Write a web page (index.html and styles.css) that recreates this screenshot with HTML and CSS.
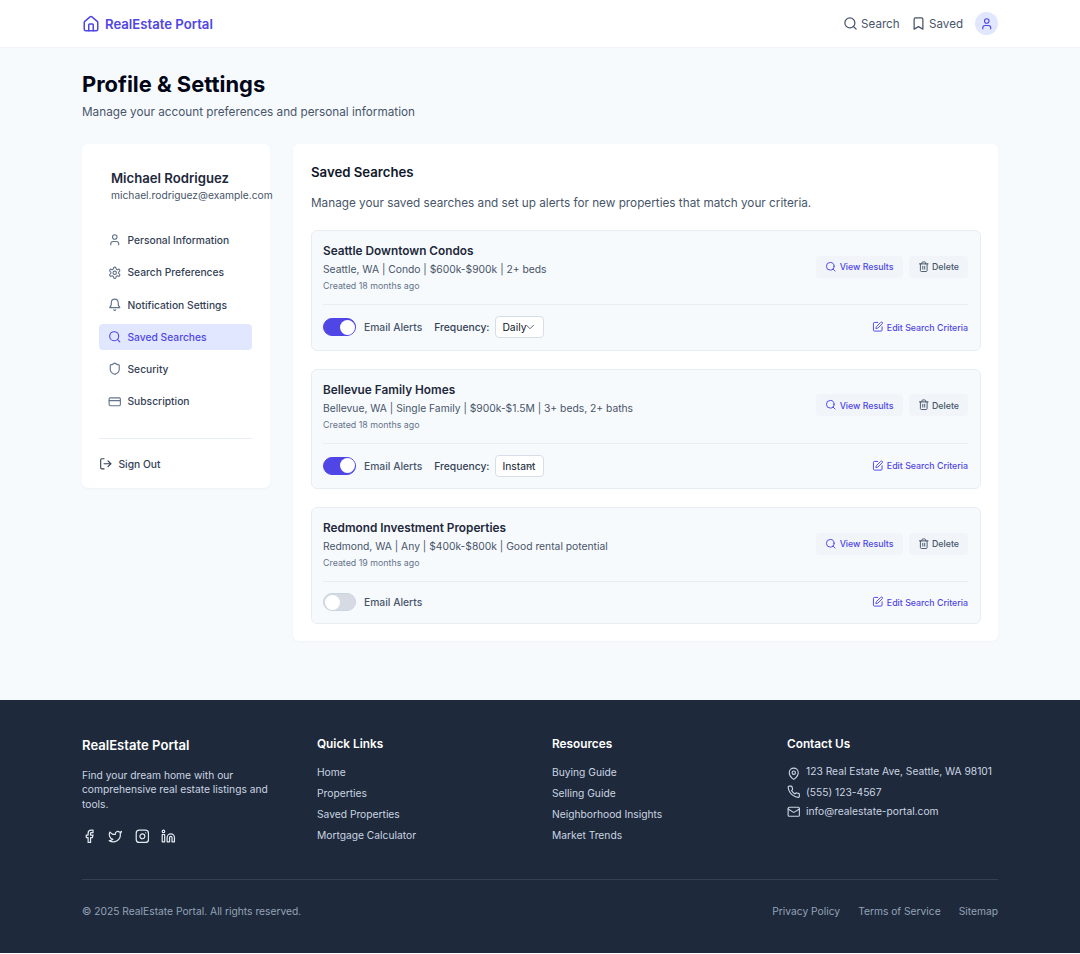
FILE: index.html
```html
<!DOCTYPE html>
<html lang="en">
<head>
  <meta charset="UTF-8" />
  <meta name="viewport" content="width=device-width, initial-scale=1.0" />
  <title>Profile &amp; Settings - RealEstate Portal</title>
  <link rel="stylesheet" href="styles.css">
</head>
<body>
  <!-- icon sprite -->
  <svg class="sprite" xmlns="http://www.w3.org/2000/svg">
    <symbol id="i-home" viewBox="0 0 24 24"><path d="M15 21v-8a1 1 0 0 0-1-1h-4a1 1 0 0 0-1 1v8"/><path d="M3 10a2 2 0 0 1 .709-1.528l7-5.999a2 2 0 0 1 2.582 0l7 5.999A2 2 0 0 1 21 10v9a2 2 0 0 1-2 2H5a2 2 0 0 1-2-2z"/></symbol>
    <symbol id="i-search" viewBox="0 0 24 24"><circle cx="11" cy="11" r="8"/><path d="m21 21-4.3-4.3"/></symbol>
    <symbol id="i-bookmark" viewBox="0 0 24 24"><path d="m19 21-7-4-7 4V5a2 2 0 0 1 2-2h10a2 2 0 0 1 2 2v16z"/></symbol>
    <symbol id="i-user" viewBox="0 0 24 24"><path d="M19 21v-2a4 4 0 0 0-4-4H9a4 4 0 0 0-4 4v2"/><circle cx="12" cy="7" r="4"/></symbol>
    <symbol id="i-settings" viewBox="0 0 24 24"><path d="M12.22 2h-.44a2 2 0 0 0-2 2v.18a2 2 0 0 1-1 1.73l-.43.25a2 2 0 0 1-2 0l-.15-.08a2 2 0 0 0-2.73.73l-.22.38a2 2 0 0 0 .73 2.73l.15.1a2 2 0 0 1 1 1.72v.51a2 2 0 0 1-1 1.74l-.15.09a2 2 0 0 0-.73 2.73l.22.38a2 2 0 0 0 2.73.73l.15-.08a2 2 0 0 1 2 0l.43.25a2 2 0 0 1 1 1.73V20a2 2 0 0 0 2 2h.44a2 2 0 0 0 2-2v-.18a2 2 0 0 1 1-1.73l.43-.25a2 2 0 0 1 2 0l.15.08a2 2 0 0 0 2.73-.73l.22-.39a2 2 0 0 0-.73-2.73l-.15-.08a2 2 0 0 1-1-1.74v-.5a2 2 0 0 1 1-1.74l.15-.09a2 2 0 0 0 .73-2.73l-.22-.38a2 2 0 0 0-2.73-.73l-.15.08a2 2 0 0 1-2 0l-.43-.25a2 2 0 0 1-1-1.73V4a2 2 0 0 0-2-2z"/><circle cx="12" cy="12" r="3"/></symbol>
    <symbol id="i-bell" viewBox="0 0 24 24"><path d="M6 8a6 6 0 0 1 12 0c0 7 3 9 3 9H3s3-2 3-9"/><path d="M10.3 21a1.94 1.94 0 0 0 3.4 0"/></symbol>
    <symbol id="i-shield" viewBox="0 0 24 24"><path d="M20 13c0 5-3.5 7.5-7.66 8.95a1 1 0 0 1-.67-.01C7.5 20.5 4 18 4 13V6a1 1 0 0 1 1-1c2 0 4.5-1.2 6.24-2.72a1.17 1.17 0 0 1 1.52 0C14.51 3.81 17 5 19 5a1 1 0 0 1 1 1z"/></symbol>
    <symbol id="i-card" viewBox="0 0 24 24"><rect width="20" height="14" x="2" y="5" rx="2"/><path d="M2 10h20"/></symbol>
    <symbol id="i-logout" viewBox="0 0 24 24"><path d="M9 21H5a2 2 0 0 1-2-2V5a2 2 0 0 1 2-2h4"/><path d="m16 17 5-5-5-5"/><path d="M21 12H9"/></symbol>
    <symbol id="i-trash" viewBox="0 0 24 24"><path d="M3 6h18"/><path d="M19 6v14c0 1-1 2-2 2H7c-1 0-2-1-2-2V6"/><path d="M8 6V4c0-1 1-2 2-2h4c1 0 2 1 2 2v2"/><path d="M10 11v6"/><path d="M14 11v6"/></symbol>
    <symbol id="i-edit" viewBox="0 0 24 24"><path d="M12 3H5a2 2 0 0 0-2 2v14a2 2 0 0 0 2 2h14a2 2 0 0 0 2-2v-7"/><path d="M18.375 2.625a1 1 0 0 1 3 3l-9.013 9.014a2 2 0 0 1-.853.505l-2.873.84a.5.5 0 0 1-.62-.62l.84-2.873a2 2 0 0 1 .506-.852z"/></symbol>
    <symbol id="i-chevron" viewBox="0 0 24 24"><path d="m6 9 6 6 6-6"/></symbol>
    <symbol id="i-facebook" viewBox="0 0 24 24"><path d="M18 2h-3a5 5 0 0 0-5 5v3H7v4h3v8h4v-8h3l1-4h-4V7a1 1 0 0 1 1-1h3z"/></symbol>
    <symbol id="i-twitter" viewBox="0 0 24 24"><path d="M22 4s-.7 2.1-2 3.4c1.6 10-9.4 17.3-18 11.6 2.2.1 4.4-.6 6-2C3 15.5.5 9.6 3 5c2.2 2.6 5.6 4.1 9 4-.9-4.2 4-6.6 7-3.8 1.1 0 3-1.2 3-1.2z"/></symbol>
    <symbol id="i-instagram" viewBox="0 0 24 24"><rect width="20" height="20" x="2" y="2" rx="5" ry="5"/><path d="M16 11.37A4 4 0 1 1 12.63 8 4 4 0 0 1 16 11.37z"/><path d="M17.5 6.5h.01"/></symbol>
    <symbol id="i-linkedin" viewBox="0 0 24 24"><path d="M16 8a6 6 0 0 1 6 6v7h-4v-7a2 2 0 0 0-2-2 2 2 0 0 0-2 2v7h-4v-7a6 6 0 0 1 6-6z"/><rect width="4" height="12" x="2" y="9"/><circle cx="4" cy="4" r="2"/></symbol>
    <symbol id="i-pin" viewBox="0 0 24 24"><path d="M20 10c0 6-8 12-8 12s-8-6-8-12a8 8 0 0 1 16 0Z"/><circle cx="12" cy="10" r="3"/></symbol>
    <symbol id="i-phone" viewBox="0 0 24 24"><path d="M22 16.92v3a2 2 0 0 1-2.18 2 19.79 19.79 0 0 1-8.63-3.07 19.5 19.5 0 0 1-6-6 19.79 19.79 0 0 1-3.07-8.67A2 2 0 0 1 4.11 2h3a2 2 0 0 1 2 1.72 12.84 12.84 0 0 0 .7 2.81 2 2 0 0 1-.45 2.11L8.09 9.91a16 16 0 0 0 6 6l1.27-1.27a2 2 0 0 1 2.11-.45 12.84 12.84 0 0 0 2.81.7A2 2 0 0 1 22 16.92z"/></symbol>
    <symbol id="i-mail" viewBox="0 0 24 24"><rect width="20" height="16" x="2" y="4" rx="2"/><path d="m22 7-8.97 5.7a1.94 1.94 0 0 1-2.06 0L2 7"/></symbol>
  </svg>

  <header class="site-header">
    <div class="container header-inner">
      <a class="brand" href="#"><svg class="icon icon-lg"><use href="#i-home"/></svg>RealEstate Portal</a>
      <nav class="top-nav">
        <a href="#"><svg class="icon icon-md"><use href="#i-search"/></svg>Search</a>
        <a href="#"><svg class="icon icon-md"><use href="#i-bookmark"/></svg>Saved</a>
        <span class="avatar"><svg class="icon icon-sm"><use href="#i-user"/></svg></span>
      </nav>
    </div>
  </header>

  <main class="page">
    <div class="container">
      <h1>Profile &amp; Settings</h1>
      <p class="page-sub">Manage your account preferences and personal information</p>

      <div class="layout">
        <aside class="sidebar">
          <div class="profile">
            <div class="profile-name">Michael Rodriguez</div>
            <div class="profile-email">michael.rodriguez@example.com</div>
          </div>
          <ul class="side-nav">
            <li><a href="#"><svg class="icon icon-sm"><use href="#i-user"/></svg>Personal Information</a></li>
            <li><a href="#"><svg class="icon icon-sm"><use href="#i-settings"/></svg>Search Preferences</a></li>
            <li><a href="#"><svg class="icon icon-sm"><use href="#i-bell"/></svg>Notification Settings</a></li>
            <li><a href="#" class="active"><svg class="icon icon-sm"><use href="#i-search"/></svg>Saved Searches</a></li>
            <li><a href="#"><svg class="icon icon-sm"><use href="#i-shield"/></svg>Security</a></li>
            <li><a href="#"><svg class="icon icon-sm"><use href="#i-card"/></svg>Subscription</a></li>
          </ul>
          <a href="#" class="sign-out"><svg class="icon icon-sm"><use href="#i-logout"/></svg>Sign Out</a>
        </aside>

        <section class="panel">
          <h2>Saved Searches</h2>
          <p class="panel-sub">Manage your saved searches and set up alerts for new properties that match your criteria.</p>

          <div class="search-card">
            <div class="card-top">
              <div>
                <h3>Seattle Downtown Condos</h3>
                <p class="meta">Seattle, WA | Condo | $600k-$900k | 2+ beds</p>
                <p class="created">Created 18 months ago</p>
              </div>
              <div class="card-actions">
                <a href="#" class="btn btn-view"><svg class="icon icon-xs"><use href="#i-search"/></svg>View Results</a>
                <a href="#" class="btn btn-delete"><svg class="icon icon-xs"><use href="#i-trash"/></svg>Delete</a>
              </div>
            </div>
            <div class="card-bottom">
              <div class="alerts">
                <span class="toggle on"></span>
                <span class="alerts-label">Email Alerts</span>
                <span class="freq-label">Frequency:</span>
                <span class="select">Daily<svg class="icon select-arrow"><use href="#i-chevron"/></svg></span>
              </div>
              <a href="#" class="edit-link"><svg class="icon icon-xs"><use href="#i-edit"/></svg>Edit Search Criteria</a>
            </div>
          </div>

          <div class="search-card">
            <div class="card-top">
              <div>
                <h3>Bellevue Family Homes</h3>
                <p class="meta">Bellevue, WA | Single Family | $900k-$1.5M | 3+ beds, 2+ baths</p>
                <p class="created">Created 18 months ago</p>
              </div>
              <div class="card-actions">
                <a href="#" class="btn btn-view"><svg class="icon icon-xs"><use href="#i-search"/></svg>View Results</a>
                <a href="#" class="btn btn-delete"><svg class="icon icon-xs"><use href="#i-trash"/></svg>Delete</a>
              </div>
            </div>
            <div class="card-bottom">
              <div class="alerts">
                <span class="toggle on"></span>
                <span class="alerts-label">Email Alerts</span>
                <span class="freq-label">Frequency:</span>
                <span class="select">Instant<svg class="icon select-arrow"><use href="#i-chevron"/></svg></span>
              </div>
              <a href="#" class="edit-link"><svg class="icon icon-xs"><use href="#i-edit"/></svg>Edit Search Criteria</a>
            </div>
          </div>

          <div class="search-card">
            <div class="card-top">
              <div>
                <h3>Redmond Investment Properties</h3>
                <p class="meta">Redmond, WA | Any | $400k-$800k | Good rental potential</p>
                <p class="created">Created 19 months ago</p>
              </div>
              <div class="card-actions">
                <a href="#" class="btn btn-view"><svg class="icon icon-xs"><use href="#i-search"/></svg>View Results</a>
                <a href="#" class="btn btn-delete"><svg class="icon icon-xs"><use href="#i-trash"/></svg>Delete</a>
              </div>
            </div>
            <div class="card-bottom">
              <div class="alerts">
                <span class="toggle"></span>
                <span class="alerts-label">Email Alerts</span>
              </div>
              <a href="#" class="edit-link"><svg class="icon icon-xs"><use href="#i-edit"/></svg>Edit Search Criteria</a>
            </div>
          </div>
        </section>
      </div>
    </div>
  </main>

  <footer class="site-footer">
    <div class="container">
      <div class="footer-grid">
        <div>
          <div class="footer-brand">RealEstate Portal</div>
          <p class="footer-text">Find your dream home with our comprehensive real estate listings and tools.</p>
          <div class="socials">
            <a href="#"><svg class="icon icon-social"><use href="#i-facebook"/></svg></a>
            <a href="#"><svg class="icon icon-social"><use href="#i-twitter"/></svg></a>
            <a href="#"><svg class="icon icon-social"><use href="#i-instagram"/></svg></a>
            <a href="#"><svg class="icon icon-social"><use href="#i-linkedin"/></svg></a>
          </div>
        </div>
        <div>
          <h4>Quick Links</h4>
          <ul class="footer-links">
            <li><a href="#">Home</a></li>
            <li><a href="#">Properties</a></li>
            <li><a href="#">Saved Properties</a></li>
            <li><a href="#">Mortgage Calculator</a></li>
          </ul>
        </div>
        <div>
          <h4>Resources</h4>
          <ul class="footer-links">
            <li><a href="#">Buying Guide</a></li>
            <li><a href="#">Selling Guide</a></li>
            <li><a href="#">Neighborhood Insights</a></li>
            <li><a href="#">Market Trends</a></li>
          </ul>
        </div>
        <div>
          <h4>Contact Us</h4>
          <ul class="contact">
            <li><svg class="icon icon-sm"><use href="#i-pin"/></svg>123 Real Estate Ave, Seattle, WA 98101</li>
            <li><svg class="icon icon-sm"><use href="#i-phone"/></svg>(555) 123-4567</li>
            <li><svg class="icon icon-sm"><use href="#i-mail"/></svg>info@realestate-portal.com</li>
          </ul>
        </div>
      </div>
      <div class="footer-bottom">
        <span>© 2025 RealEstate Portal. All rights reserved.</span>
        <div class="footer-legal">
          <a href="#">Privacy Policy</a>
          <a href="#">Terms of Service</a>
          <a href="#">Sitemap</a>
        </div>
      </div>
    </div>
  </footer>
</body>
</html>
```
FILE: styles.css
```css
* {
  box-sizing: border-box;
}

body {
  margin: 0;
  background-color: #fff;
  font-family: Inter, "Liberation Sans", sans-serif;
  color: #0f172a;
}

a {
  color: inherit;
  text-decoration: none;
}

ul {
  list-style: none;
  margin: 0;
  padding: 0;
}

h1, h2, h3, h4, p {
  margin: 0;
}

.sprite {
  display: none;
}

.container {
  width: 916px;
  margin: 0 auto;
}

.icon {
  flex: none;
  fill: none;
  stroke: currentColor;
  stroke-width: 2;
  stroke-linecap: round;
  stroke-linejoin: round;
}

.icon-lg { width: 18px; height: 18px; }
.icon-md { width: 15px; height: 15px; }
.icon-sm { width: 13.5px; height: 13.5px; }
.icon-xs { width: 11.5px; height: 11.5px; }
.icon-social { width: 14.7px; height: 14.7px; }

/* Header */
.site-header {
  height: 48px;
  background-color: #fff;
  border-bottom: 1px solid #f1f5f9;
}

.header-inner {
  height: 47px;
  display: flex;
  justify-content: space-between;
  align-items: center;
}

.brand {
  display: flex;
  align-items: center;
  gap: 5px;
  font-size: 13.15px;
  font-weight: 600;
  color: #4f46e5;
}

.top-nav {
  display: flex;
  align-items: center;
  gap: 11.5px;
  font-size: 11.6px;
  color: #475569;
}

.top-nav a {
  display: flex;
  align-items: center;
  gap: 3px;
}

.avatar {
  width: 23.5px;
  height: 23.5px;
  border-radius: 50%;
  background-color: #e0e7ff;
  color: #4f46e5;
  display: flex;
  align-items: center;
  justify-content: center;
}

/* Page */
.page {
  background-color: #f7fafd;
  padding: 23px 0 58.5px;
}

h1 {
  font-size: 21.9px;
  line-height: 27px;
  font-weight: 700;
  color: #020617;
}

.page-sub {
  margin-top: 5px;
  font-size: 11.75px;
  line-height: 18px;
  color: #475569;
}

.layout {
  margin-top: 23px;
  display: flex;
  align-items: flex-start;
  gap: 23px;
}

/* Sidebar */
.sidebar {
  width: 188px;
  flex: none;
  background-color: #fff;
  border-radius: 6px;
  padding: 18px 18px 16px 17px;
  box-shadow: 0 1px 2px rgba(15, 23, 42, 0.04);
}

.profile {
  padding: 6px 12px;
  margin-bottom: 18px;
  white-space: nowrap;
}

.profile-name {
  font-size: 13.15px;
  line-height: 20px;
  font-weight: 600;
  color: #1e293b;
}

.profile-email {
  font-size: 10.25px;
  line-height: 15px;
  color: #475569;
}

.side-nav {
  display: flex;
  flex-direction: column;
  gap: 6px;
  padding-bottom: 23px;
  border-bottom: 1px solid #e9edf4;
}

.side-nav a {
  display: flex;
  align-items: center;
  gap: 6px;
  height: 26.25px;
  padding: 0 9px;
  border-radius: 4px;
  font-size: 10.25px;
  font-weight: 500;
  color: #334155;
}

.side-nav a .icon {
  color: #64748b;
}

.side-nav a.active {
  background-color: #e0e7ff;
  color: #4f46e5;
}

.side-nav a.active .icon {
  color: #4f46e5;
}

.sign-out {
  display: flex;
  align-items: center;
  gap: 6px;
  margin-top: 18px;
  height: 15px;
  font-size: 10.25px;
  font-weight: 500;
  color: #334155;
}

/* Saved searches */
.panel {
  flex: 1;
  background-color: #fff;
  border-radius: 6px;
  padding: 18px 17px 17.5px 18px;
  box-shadow: 0 1px 2px rgba(15, 23, 42, 0.04);
}

h2 {
  font-size: 13.2px;
  line-height: 20px;
  font-weight: 600;
  color: #0f172a;
}

.panel-sub {
  margin-top: 12px;
  font-size: 11.75px;
  line-height: 18px;
  color: #475569;
}

.search-card {
  margin-top: 18px;
  padding: 11.25px 12px 11.5px 11px;
  background-color: #f7fafd;
  border: 1px solid #e8edf3;
  border-radius: 6px;
}

.card-top {
  display: flex;
  justify-content: space-between;
  align-items: center;
  padding-bottom: 11.25px;
  border-bottom: 1px solid #e8edf3;
}

h3 {
  font-size: 11.8px;
  line-height: 18px;
  font-weight: 600;
  color: #1e293b;
}

.meta {
  margin-top: 2px;
  font-size: 10.3px;
  line-height: 15px;
  color: #475569;
}

.created {
  margin-top: 2px;
  font-size: 8.85px;
  line-height: 13.5px;
  color: #64748b;
}

.card-actions {
  display: flex;
  gap: 6px;
  margin-bottom: 2px;
}

.btn {
  display: flex;
  align-items: center;
  gap: 3px;
  height: 22px;
  padding: 0 9px;
  border-radius: 4px;
  background-color: #f1f5fa;
  font-size: 8.8px;
  font-weight: 500;
}

.btn-view { color: #4f46e5; }
.btn-delete { color: #475569; }

.card-bottom {
  display: flex;
  justify-content: space-between;
  align-items: center;
  margin-top: 11px;
}

.alerts {
  display: flex;
  align-items: center;
  font-size: 10.3px;
  font-weight: 500;
  color: #475569;
}

.toggle {
  position: relative;
  width: 33px;
  height: 18px;
  border-radius: 9px;
  background-color: #d5dae3;
  border: 1px solid #cbd5e1;
  margin-right: 8px;
}

.toggle::after {
  content: "";
  position: absolute;
  top: 0.5px;
  left: 0.5px;
  width: 15px;
  height: 15px;
  border-radius: 50%;
  background-color: #fff;
}

.toggle.on {
  background-color: #4f46e5;
  border-color: #4f46e5;
}

.toggle.on::after {
  left: auto;
  right: 0.5px;
}

.freq-label {
  margin-left: 12px;
  margin-right: 6px;
  color: #334155;
}

.select {
  position: relative;
  width: 49px;
  height: 22px;
  padding-left: 6px;
  display: flex;
  align-items: center;
  background-color: #fff;
  border: 1px solid #d8dee8;
  border-radius: 4px;
  font-weight: 400;
  color: #0f172a;
  white-space: nowrap;
}

.select-arrow {
  position: absolute;
  right: 6px;
  top: 3px;
  width: 14px;
  height: 14px;
  stroke-width: 1.5;
  color: #475569;
}

.edit-link {
  display: flex;
  align-items: center;
  gap: 3px;
  font-size: 8.8px;
  font-weight: 500;
  color: #4f46e5;
}

/* Footer */
.site-footer {
  height: 253px;
  padding-top: 35px;
  background-color: #1e293b;
  color: #cbd5e1;
}

.footer-grid {
  display: grid;
  grid-template-columns: repeat(4, 1fr);
  gap: 24px;
  height: 145px;
  border-bottom: 1px solid #334155;
}

.footer-brand {
  font-size: 13.1px;
  line-height: 20px;
  font-weight: 600;
  color: #fff;
}

.footer-text {
  margin-top: 13px;
  font-size: 10.25px;
  line-height: 14.6px;
}

.socials {
  display: flex;
  gap: 11.7px;
  margin-top: 18px;
  color: #e2e8f0;
}

.socials a {
  display: flex;
}

h4 {
  font-size: 11.8px;
  line-height: 18px;
  font-weight: 600;
  color: #fff;
}

.footer-links {
  margin-top: 12px;
  display: flex;
  flex-direction: column;
  gap: 6px;
  font-size: 10.25px;
  line-height: 15px;
}

.contact {
  margin-top: 11px;
  display: flex;
  flex-direction: column;
  gap: 4.6px;
  font-size: 10.25px;
  line-height: 15px;
}

.contact li {
  display: flex;
  align-items: center;
  gap: 5.5px;
}

.contact li:first-child .icon {
  margin-top: 3px;
}

.footer-bottom {
  display: flex;
  justify-content: space-between;
  align-items: center;
  margin-top: 24px;
  font-size: 10.25px;
  line-height: 15px;
  color: #94a3b8;
}

.footer-legal {
  display: flex;
  gap: 18px;
}
```
